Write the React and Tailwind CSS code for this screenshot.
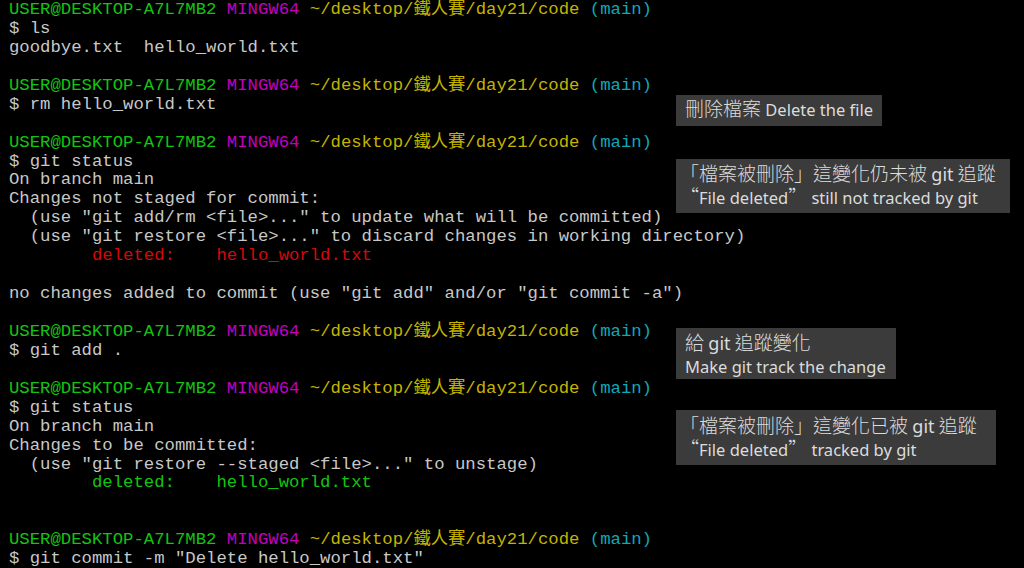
import React from 'react'

const prompt = { user: 'USER@DESKTOP-A7L7MB2', sys: 'MINGW64', path: '~/desktop/鐵人賽/day21/code', branch: '(main)' }

function Prompt() {
    return (
        <div>
            <span className="text-[#13c413]">{prompt.user}</span>{' '}
            <span className="text-[#c200c2]">{prompt.sys}</span>{' '}
            <span className="text-[#c4b400]">{prompt.path}</span>{' '}
            <span className="text-[#10a8b8]">{prompt.branch}</span>
        </div>
    )
}

function Line({ children, className = '' }) {
    return <div className={`whitespace-pre ${className}`}>{children || ' '}</div>
}

// CJK parts of the notes are set larger, like the original JhengHei rendering
function Cjk({ children }) {
    return (
        <span className="text-[19px] leading-none font-light" style={{ fontFamily: '"Noto Sans CJK TC", sans-serif' }}>{children}</span>
    )
}

function Note({ className, children }) {
    return (
        <div className={`absolute bg-[#3b3b3b] text-[#dcdcdc] text-[16.5px] leading-[23px] whitespace-pre ${className}`}
            style={{ fontFamily: '"Noto Sans", "Noto Sans CJK TC", sans-serif' }}>
            {children}
        </div>
    )
}

export default function App() {
    return (
        <div className="relative w-[1024px] h-[568px] bg-black overflow-hidden">
            <div className="pl-[9px] mt-[1px] text-[17.3px] leading-[18.93px] text-[#c8c8c8]"
                style={{ fontFamily: '"Liberation Mono", "Noto Sans CJK TC", monospace' }}>
                <Prompt />
                <Line>$ ls</Line>
                <Line>goodbye.txt  hello_world.txt</Line>
                <Line />
                <Prompt />
                <Line>$ rm hello_world.txt</Line>
                <Line />
                <Prompt />
                <Line>$ git status</Line>
                <Line>On branch main</Line>
                <Line>Changes not staged for commit:</Line>
                <Line>{'  (use "git add/rm <file>..." to update what will be committed)'}</Line>
                <Line>{'  (use "git restore <file>..." to discard changes in working directory)'}</Line>
                <Line className="text-[#d40a0a]">{'        deleted:    hello_world.txt'}</Line>
                <Line />
                <Line>no changes added to commit (use "git add" and/or "git commit -a")</Line>
                <Line />
                <Prompt />
                <Line>$ git add .</Line>
                <Line />
                <Prompt />
                <Line>$ git status</Line>
                <Line>On branch main</Line>
                <Line>Changes to be committed:</Line>
                <Line>{'  (use "git restore --staged <file>..." to unstage)'}</Line>
                <Line className="text-[#13c413]">{'        deleted:    hello_world.txt'}</Line>
                <Line />
                <Line />
                <Prompt />
                <Line>$ git commit -m "Delete hello_world.txt"</Line>
            </div>

            <Note className="left-[676px] top-[95px] w-[206px] h-[31px] pl-[9px] pt-[3px]">
                <Cjk>刪除檔案</Cjk> Delete the file
            </Note>
            <Note className="left-[676px] top-[159px] w-[334px] h-[54px] pl-[4px] pt-[4px]">
                <div><Cjk>「檔案被刪除」這變化仍未被</Cjk> <span className="text-[18px]">git</span> <Cjk>追蹤</Cjk></div>
                <div><Cjk>“</Cjk>File deleted<Cjk>”</Cjk> still not tracked by git</div>
            </Note>
            <Note className="left-[676px] top-[328px] w-[220px] h-[51px] pl-[9px] pt-[4px]">
                <div><Cjk>給</Cjk> <span className="text-[18px]">git</span> <Cjk>追蹤變化</Cjk></div>
                <div>Make git track the change</div>
            </Note>
            <Note className="left-[676px] top-[410px] w-[320px] h-[55px] pl-[4px] pt-[5px]">
                <div><Cjk>「檔案被刪除」這變化已被</Cjk> <span className="text-[18px]">git</span> <Cjk>追蹤</Cjk></div>
                <div><Cjk>“</Cjk>File deleted<Cjk>”</Cjk> tracked by git</div>
            </Note>
        </div>
    )
}
